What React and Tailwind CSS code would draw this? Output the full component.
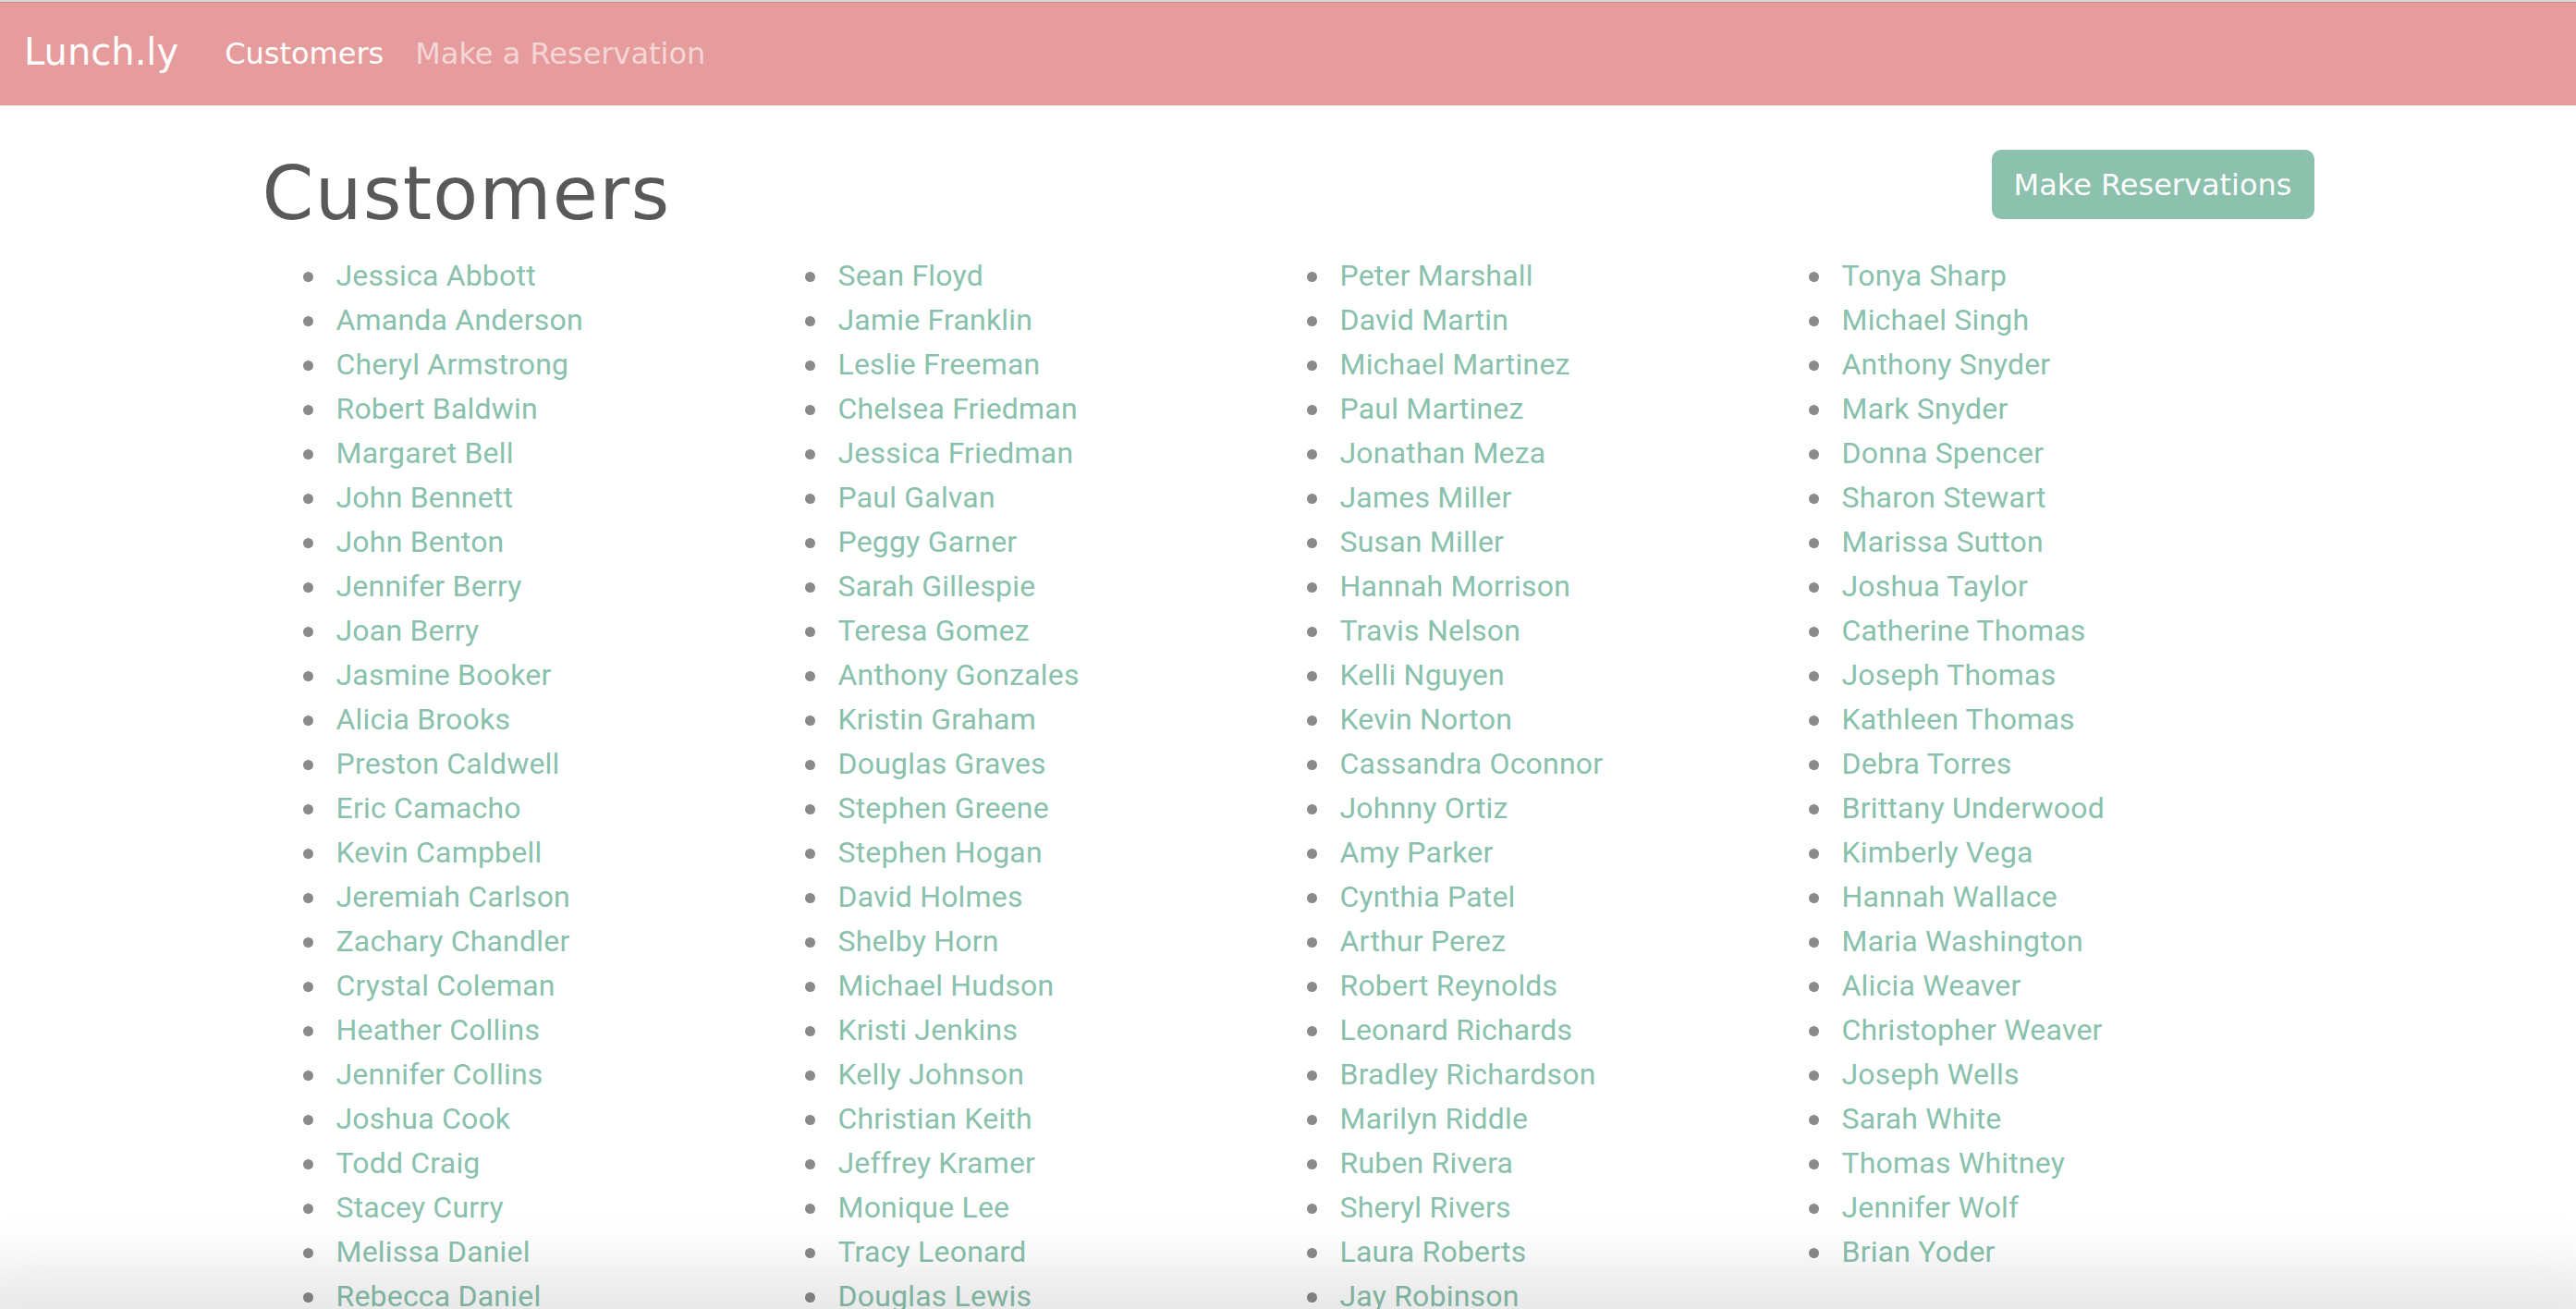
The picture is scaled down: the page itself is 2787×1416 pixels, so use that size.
import React from "react";

const columns = [
  [
    "Jessica Abbott", "Amanda Anderson", "Cheryl Armstrong", "Robert Baldwin", "Margaret Bell",
    "John Bennett", "John Benton", "Jennifer Berry", "Joan Berry", "Jasmine Booker",
    "Alicia Brooks", "Preston Caldwell", "Eric Camacho", "Kevin Campbell", "Jeremiah Carlson",
    "Zachary Chandler", "Crystal Coleman", "Heather Collins", "Jennifer Collins", "Joshua Cook",
    "Todd Craig", "Stacey Curry", "Melissa Daniel", "Rebecca Daniel",
  ],
  [
    "Sean Floyd", "Jamie Franklin", "Leslie Freeman", "Chelsea Friedman", "Jessica Friedman",
    "Paul Galvan", "Peggy Garner", "Sarah Gillespie", "Teresa Gomez", "Anthony Gonzales",
    "Kristin Graham", "Douglas Graves", "Stephen Greene", "Stephen Hogan", "David Holmes",
    "Shelby Horn", "Michael Hudson", "Kristi Jenkins", "Kelly Johnson", "Christian Keith",
    "Jeffrey Kramer", "Monique Lee", "Tracy Leonard", "Douglas Lewis",
  ],
  [
    "Peter Marshall", "David Martin", "Michael Martinez", "Paul Martinez", "Jonathan Meza",
    "James Miller", "Susan Miller", "Hannah Morrison", "Travis Nelson", "Kelli Nguyen",
    "Kevin Norton", "Cassandra Oconnor", "Johnny Ortiz", "Amy Parker", "Cynthia Patel",
    "Arthur Perez", "Robert Reynolds", "Leonard Richards", "Bradley Richardson", "Marilyn Riddle",
    "Ruben Rivera", "Sheryl Rivers", "Laura Roberts", "Jay Robinson",
  ],
  [
    "Tonya Sharp", "Michael Singh", "Anthony Snyder", "Mark Snyder", "Donna Spencer",
    "Sharon Stewart", "Marissa Sutton", "Joshua Taylor", "Catherine Thomas", "Joseph Thomas",
    "Kathleen Thomas", "Debra Torres", "Brittany Underwood", "Kimberly Vega", "Hannah Wallace",
    "Maria Washington", "Alicia Weaver", "Christopher Weaver", "Joseph Wells", "Sarah White",
    "Thomas Whitney", "Jennifer Wolf", "Brian Yoder",
  ],
];

const display = "font-['DejaVu_Sans',sans-serif]";

function Navbar() {
  return (
    <div>
      <div className="h-[2px] bg-[#dcd8d8]" />
      <div className="h-[1px] bg-[#c98a8c]" />
      <nav className={`h-[111px] bg-[#e69b9c] flex items-center pl-[26px] ${display}`}>
        <a className="text-[40px] text-white leading-[60px] mr-[50px] pb-[6px]">Lunch.ly</a>
        <a className="text-[32px] text-white leading-[48px] mr-[34px] pb-[2px]">Customers</a>
        <a className="text-[32px] text-white/60 leading-[48px] pb-[2px]">Make a Reservation</a>
      </nav>
    </div>
  );
}

function CustomerList() {
  return (
    <div className="flex gap-[32px] pl-[44px] mt-[16px] font-['Roboto',sans-serif] text-[32px] leading-[48px] tracking-[0.2px]">
      {columns.map((col, i) => (
        <ul key={i} className="w-[511px]">
          {col.map((name) => (
            <li key={name} className="flex items-center">
              <span className="w-[11px] h-[11px] rounded-full bg-[#8a8a8a] mr-[25px] mt-[2px] shrink-0" />
              <a className="text-[#89c1ac]">{name}</a>
            </li>
          ))}
        </ul>
      ))}
    </div>
  );
}

export default function App() {
  return (
    <div className="relative h-[1416px] overflow-hidden bg-white">
      <Navbar />
      <div className="w-[2280px] mx-auto px-[30px] mt-[48px]">
        <div className="flex justify-between items-start">
          <h1 className={`text-[80px] leading-[96px] text-[#595959] tracking-[1.3px] ${display}`}>
            Customers
          </h1>
          <button
            className={`h-[75px] px-[24px] rounded-[10px] bg-[#8bc1ad] text-white text-[32px] ${display}`}
          >
            Make Reservations
          </button>
        </div>
        <CustomerList />
      </div>
      <div className="pointer-events-none absolute left-[-80px] right-[-80px] top-[1370px] h-[200px] rounded-[160px] bg-black/[0.09] blur-[30px]" />
    </div>
  );
}
